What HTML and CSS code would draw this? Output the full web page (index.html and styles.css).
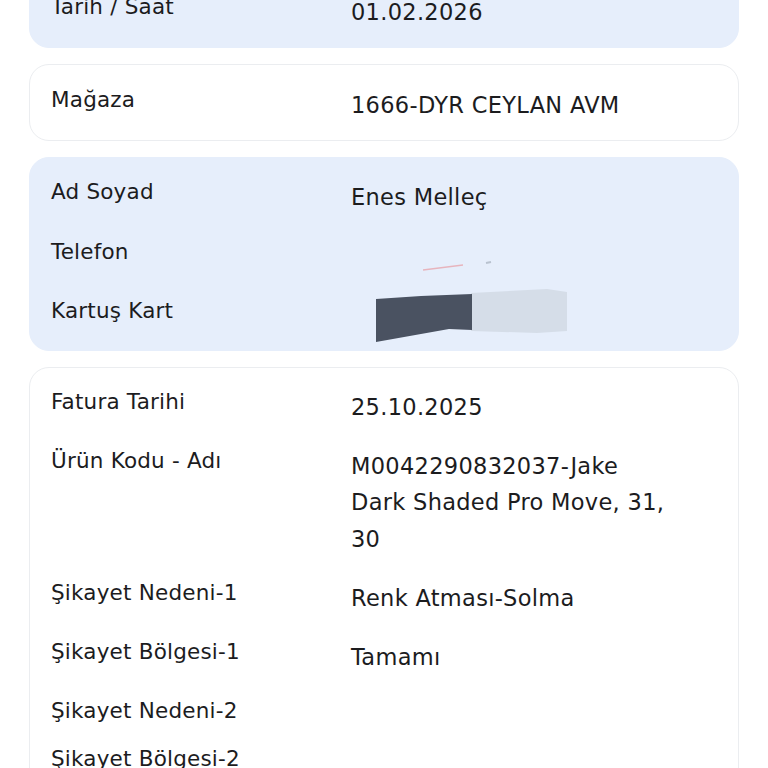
FILE: index.html
```html
<!DOCTYPE html>
<html lang="tr">
<head>
<meta charset="utf-8">
<link rel="stylesheet" href="styles.css">
</head>
<body>
<div class="page">
  <section class="card blue first">
    <div class="row"><div class="label">Tarih / Saat</div><div class="value">01.02.2026</div></div>
  </section>
  <section class="card white">
    <div class="row"><div class="label">Mağaza</div><div class="value">1666-DYR CEYLAN AVM</div></div>
  </section>
  <section class="card blue">
    <div class="row"><div class="label">Ad Soyad</div><div class="value">Enes Melleç</div></div>
    <div class="row"><div class="label">Telefon</div><div class="value">
      <svg class="redact-phone" width="160" height="36" viewBox="0 0 160 36">
        <path d="M72 31 L112 26" stroke="#e7b4bd" stroke-width="1.5" fill="none"/>
        <path d="M135 24 L140 23" stroke="#b9c2cf" stroke-width="2" fill="none"/>
      </svg>
    </div></div>
    <div class="row"><div class="label">Kartuş Kart</div><div class="value">
      <svg class="redact-card" width="230" height="56" viewBox="0 0 230 56">
        <polygon points="120,5 196,1 216,4 216,43 186,45 120,43" fill="#d5dde8"/>
        <polygon points="25,11 70,8 121,6 121,42 98,41 25,54" fill="#4a5261"/>
      </svg>
    </div></div>
  </section>
  <section class="card white details">
    <div class="row"><div class="label">Fatura Tarihi</div><div class="value">25.10.2025</div></div>
    <div class="row"><div class="label">Ürün Kodu - Adı</div><div class="value">M0042290832037-Jake Dark Shaded Pro Move, 31, 30</div></div>
    <div class="row"><div class="label">Şikayet Nedeni-1</div><div class="value">Renk Atması-Solma</div></div>
    <div class="row"><div class="label">Şikayet Bölgesi-1</div><div class="value">Tamamı</div></div>
    <div class="row"><div class="label">Şikayet Nedeni-2</div><div class="value"></div></div>
    <div class="row"><div class="label">Şikayet Bölgesi-2</div><div class="value"></div></div>
    <div class="row"><div class="label">Açıklama</div><div class="value"></div></div>
  </section>
</div>
</body>
</html>
```
FILE: styles.css
```css
html, body {
  margin: 0;
  padding: 0;
  background: #ffffff;
}
body {
  font-family: "DejaVu Sans", "Noto Sans", sans-serif;
  color: #1c1c1e;
  overflow: hidden;
  height: 768px;
}
.page {
  display: flex;
  flex-direction: column;
  gap: 16px;
  padding: 0 29px;
  margin-top: -28px;
}
.card {
  border-radius: 20px;
  border: 1px solid transparent;
  padding: 21px 21px 16px;
  display: flex;
  flex-direction: column;
  gap: 23px;
}
.card.white {
  background: #ffffff;
  border-color: #ebedf0;
  padding-top: 22px;
  padding-bottom: 17px;
}
.card.details {
  padding-top: 21px;
  gap: 22.5px;
}
.card.blue {
  background: #e6eefb;
  border-color: #e6eefb;
}
.row {
  display: grid;
  grid-template-columns: 300px 1fr;
  align-items: start;
}
.label {
  font-size: 21.5px;
  line-height: 26px;
  letter-spacing: 0.2px;
}
.value {
  font-size: 22.5px;
  line-height: 36.5px;
  letter-spacing: 0.3px;
  padding-right: 50px;
}
.value:empty {
  display: none;
}
.value svg {
  display: block;
}
.redact-phone {
  overflow: visible;
}
.redact-card {
  margin-top: -10px;
  margin-bottom: -10px;
}
```
